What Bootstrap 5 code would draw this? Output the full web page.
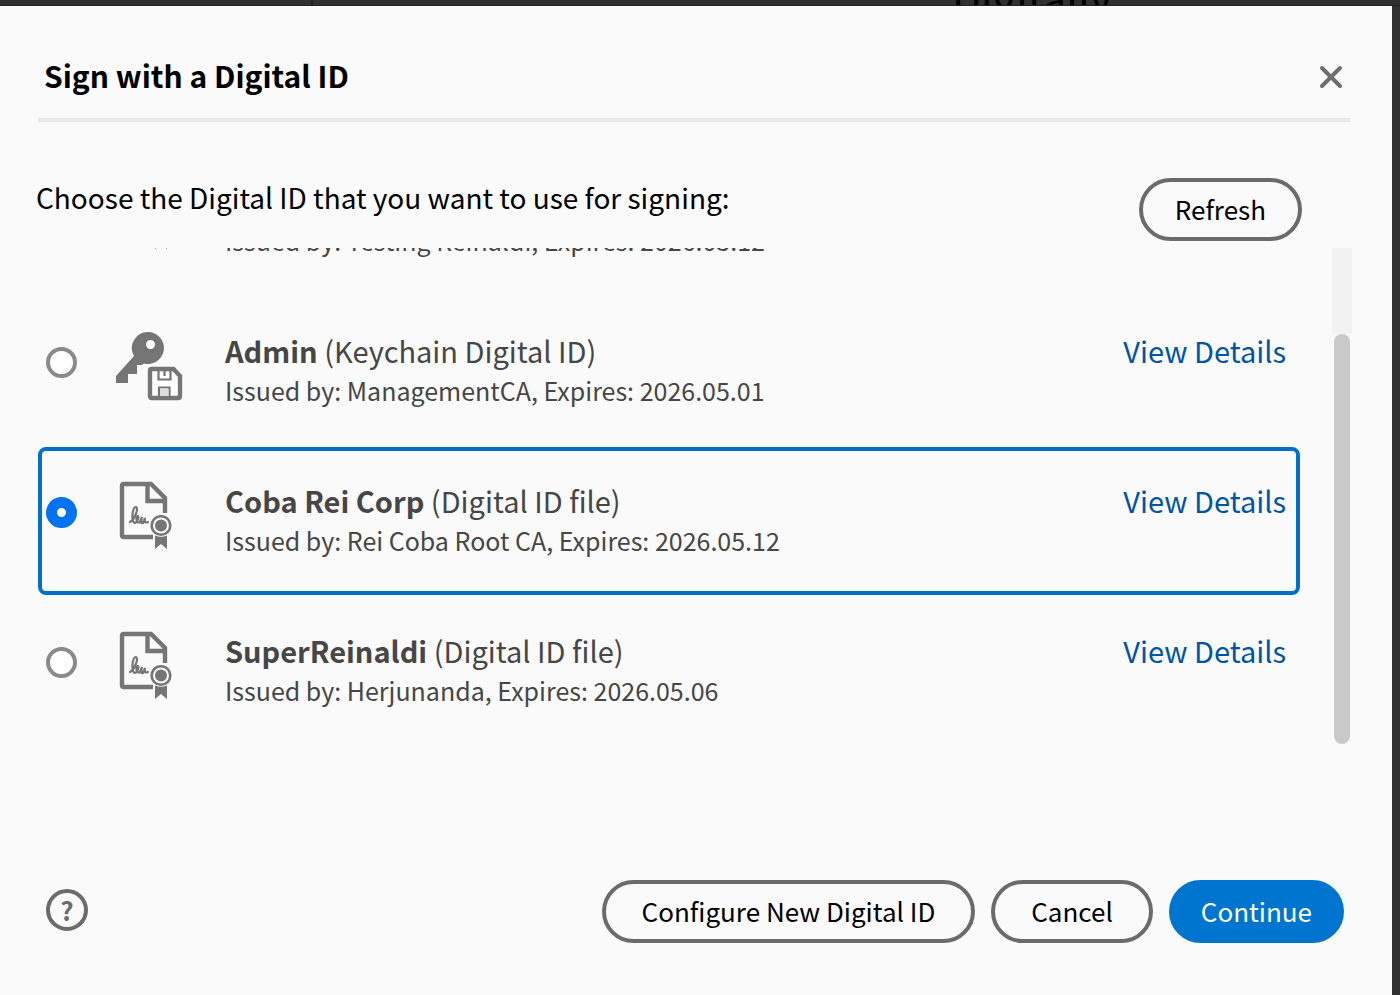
<!DOCTYPE html>
<html lang="en">
<head>
<meta charset="utf-8">
<meta name="viewport" content="width=device-width, initial-scale=1">
<title>Sign with a Digital ID</title>
<link href="https://cdn.jsdelivr.net/npm/bootstrap@5.3.0/dist/css/bootstrap.min.css" rel="stylesheet">
<style>
  body { background: #303030; font-family: "Noto Sans CJK SC", "Open Sans", sans-serif; font-size: 28px; line-height: 40px; color: #000; }
  .backdrop-strip { height: 6px; border-bottom: 1px solid #222; }
  .backdrop-pane { width: 313px; border-right: 2px solid #222; }
  .backdrop-word { left: 68%; bottom: -12px; font-size: 42px; line-height: 40px; }
  .sign-dialog { background: #fafafa; margin-right: 8px; padding: 50px 40px 52px 38px; }
  .dialog-head { border-bottom: 4px solid #e8e8e8; padding: 0 6px 23px; margin-right: 2px; }
  .dialog-title { font-size: 30px; line-height: 39px; font-weight: 700; }
  .close-btn { width: 26px; height: 26px; margin-top: 2px; color: #6e6e6e; }
  .choose-row { margin-top: 56px; padding-right: 50px; }
  .choose-row p { line-height: 38px; margin: 0 0 0 -2px; }
  .pill { height: 63px; border: 4px solid #6b6b6b; border-radius: 32px; padding: 0 32px 2px; font-size: 26px; line-height: 53px; color: #000; }
  .pill:hover { background: #eee; border-color: #505050; }
  .pill-wide { padding: 0 36px 2px; }
  .pill-main, .pill-main:hover { background: #0075cf; border-color: #0075cf; color: #fff; padding: 0 28px 2px; }
  .id-area { height: 497px; margin-top: 7px; gap: 32px; }
  .id-list { gap: 2px; }
  .id-row { height: 148px; border: 4px solid transparent; border-radius: 8px; padding: 29px 10px 0 4px; color: #464646; }
  .id-row:has(:checked) { border-color: #0070c9; }
  .id-row .form-check-input { width: 31px; height: 31px; margin: 17px 0 0; border: 4px solid #8a8a8a; background-color: #fff; box-shadow: none; }
  .id-row .form-check-input:checked { background: #fff; border: 11px solid #0073f0; }
  .id-icon { width: 70px; height: 72px; margin: 0 41px 0 37px; color: #757575; }
  .id-name { font-size: 29px; min-height: 40px; }
  .id-meta { font-size: 25px; }
  .details { font-size: 29px; color: #0054a6; }
  .track { width: 20px; background: linear-gradient(#f2f2f2 86px, #fafafa 86px); padding: 86px 2px 1px; }
  .thumb { background: #c9c9c9; border-radius: 8px; }
  .help-btn { width: 42px; height: 42px; margin: 0 0 3px 8px; color: #6b6b6b; border: 4px solid; font-size: 26px; line-height: 32px; }
</style>
</head>
<body class="d-flex flex-column min-vh-100">
<svg class="d-none" xmlns="http://www.w3.org/2000/svg">
  <symbol id="file-id" viewBox="114 480 70 72">
    <path d="M153 537H124q-2 0-2-2V486q0-2 2-2H151L165 498V513M147.500 484V501H165" fill="none" stroke="currentColor" stroke-width="4.400"/>
    <path d="M130 522C135 519 139 508 136 507C132 507 131 523 135 523C138 522 139 516 138 516C135 518 137 524 140 522L142 517Q140 524 143 523L145 518Q144 524 148 522" fill="none" stroke="currentColor" stroke-width="2.200" stroke-linecap="round"/>
    <circle cx="161" cy="525.500" r="9.300" fill="#fafafa" stroke="currentColor" stroke-width="2.600"/>
    <circle cx="161" cy="525.500" r="6" fill="currentColor"/>
    <path d="M155 535.500Q161 538 167 535.500V549L161 544L155 549Z" fill="currentColor"/>
  </symbol>
  <symbol id="key-id" viewBox="114 330 70 72">
    <path fill="currentColor" fill-rule="evenodd" d="M148 332a16 16 0 1 1-4 31.500L142 365H137V374H128V383H116V376L134 356A16 16 0 0 1 148 332ZM150.500 340a4.500 4.500 0 1 0 .01 0Z"/>
    <path d="M150 371q0-2 2-2H173.500L180 376V396q0 2-2 2H152q-2 0-2-2Z" fill="#fff" stroke="currentColor" stroke-width="4.400"/>
    <path d="M158.500 369V379.500H170.500V369M164.500 370V376M159 398V387.500H169.500V398" fill="none" stroke="currentColor" stroke-width="2.200"/>
    <path d="M160 388.500h8.500v7.500h-8.500z" fill="#ddd"/>
  </symbol>
</svg>

<div class="backdrop-strip d-flex position-relative overflow-hidden" aria-hidden="true">
  <div class="backdrop-pane"></div>
  <div class="backdrop-word position-absolute">Digitally</div>
</div>

<main class="sign-dialog flex-grow-1 d-flex flex-column">
  <header class="dialog-head d-flex justify-content-between align-items-center">
    <h1 class="dialog-title m-0">Sign with a Digital ID</h1>
    <button type="button" class="close-btn btn p-0 border-0 d-flex" aria-label="Close">
      <svg viewBox="0 0 26 26" width="26" height="26"><path d="M4 4L22 22M22 4L4 22" stroke="currentColor" stroke-width="4" stroke-linecap="round"/></svg>
    </button>
  </header>

  <div class="choose-row d-flex justify-content-between align-items-start">
    <p id="choose">Choose the Digital ID that you want to use for signing:</p>
    <button type="button" class="btn pill">Refresh</button>
  </div>

  <div class="id-area d-flex">
    <div class="id-list flex-grow-1 d-flex flex-column justify-content-end overflow-hidden" role="radiogroup" aria-labelledby="choose">
      <div class="id-row d-flex align-items-start flex-shrink-0">
        <input class="form-check-input flex-shrink-0" type="radio" name="did" id="id0">
        <svg class="id-icon flex-shrink-0"><use href="#file-id"/></svg>
        <label class="flex-grow-1" for="id0"><span class="id-name d-block"></span><span class="id-meta d-block">Issued by: Testing Reinaldi, Expires: 2026.05.12</span></label>
      </div>
      <div class="id-row d-flex align-items-start flex-shrink-0">
        <input class="form-check-input flex-shrink-0" type="radio" name="did" id="id1">
        <svg class="id-icon flex-shrink-0"><use href="#key-id"/></svg>
        <label class="flex-grow-1" for="id1"><span class="id-name d-block"><b>Admin</b> (Keychain Digital ID)</span><span class="id-meta d-block">Issued by: ManagementCA, Expires: 2026.05.01</span></label>
        <a class="details text-decoration-none" href="#">View Details</a>
      </div>
      <div class="id-row d-flex align-items-start flex-shrink-0">
        <input class="form-check-input flex-shrink-0" type="radio" name="did" id="id2" checked>
        <svg class="id-icon flex-shrink-0"><use href="#file-id"/></svg>
        <label class="flex-grow-1" for="id2"><span class="id-name d-block"><b>Coba Rei Corp</b> (Digital ID file)</span><span class="id-meta d-block">Issued by: Rei Coba Root CA, Expires: 2026.05.12</span></label>
        <a class="details text-decoration-none" href="#">View Details</a>
      </div>
      <div class="id-row d-flex align-items-start flex-shrink-0">
        <input class="form-check-input flex-shrink-0" type="radio" name="did" id="id3">
        <svg class="id-icon flex-shrink-0"><use href="#file-id"/></svg>
        <label class="flex-grow-1" for="id3"><span class="id-name d-block"><b>SuperReinaldi</b> (Digital ID file)</span><span class="id-meta d-block">Issued by: Herjunanda, Expires: 2026.05.06</span></label>
        <a class="details text-decoration-none" href="#">View Details</a>
      </div>
    </div>
    <div class="track flex-shrink-0"><div class="thumb h-100"></div></div>
  </div>

  <footer class="d-flex align-items-center gap-3 mt-auto pe-2">
    <button type="button" class="help-btn btn rounded-circle p-0 fw-bold me-auto" aria-label="Help">?</button>
    <button type="button" class="btn pill pill-wide">Configure New Digital ID</button>
    <button type="button" class="btn pill pill-wide">Cancel</button>
    <button type="button" class="btn pill pill-main">Continue</button>
  </footer>
</main>
<script src="https://cdn.jsdelivr.net/npm/bootstrap@5.3.0/dist/js/bootstrap.bundle.min.js"></script>
</body>
</html>
